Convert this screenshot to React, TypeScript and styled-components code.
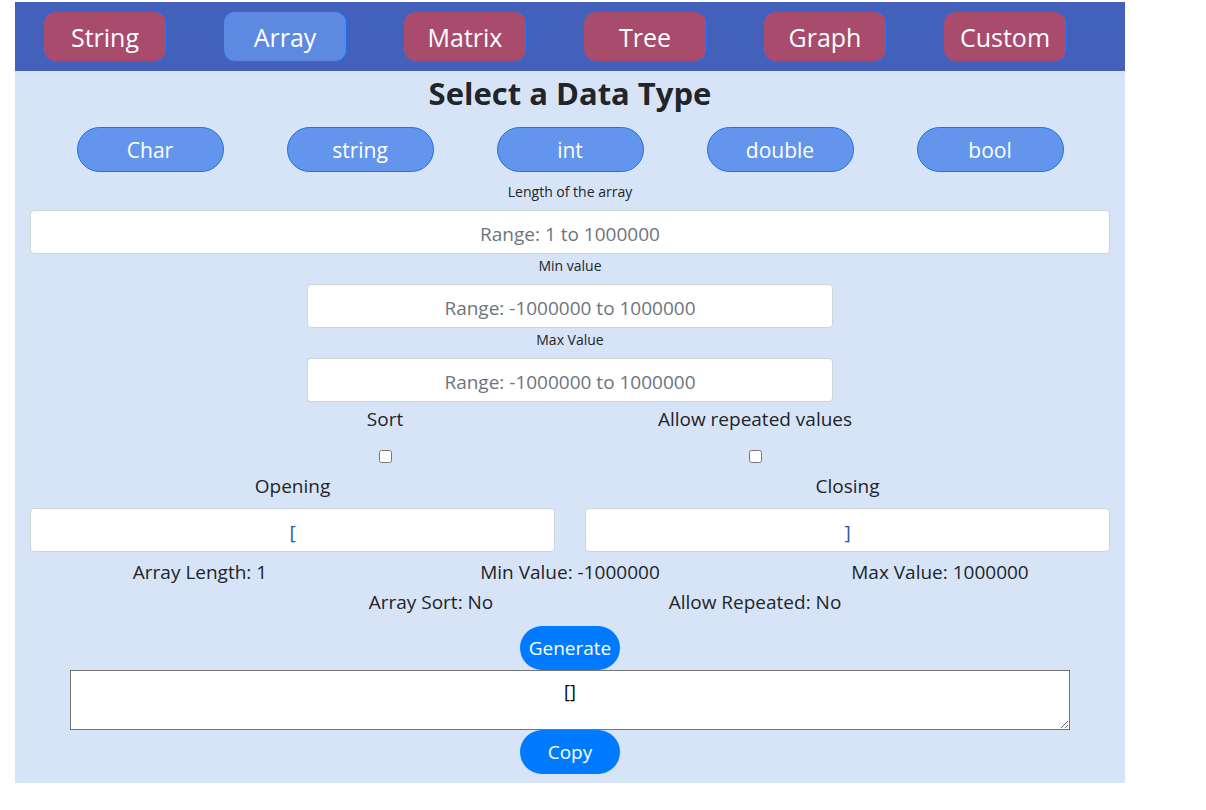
import styled, { createGlobalStyle } from 'styled-components';

const GlobalStyle = createGlobalStyle`
  body {
    margin: 0;
    background: #ffffff;
    font-family: 'Segoe UI', 'Open Sans', 'Noto Sans', sans-serif;
    color: #212529;
  }
`;

const structures = ['String', 'Array', 'Matrix', 'Tree', 'Graph', 'Custom'];
const dataTypes = ['Char', 'string', 'int', 'double', 'bool'];

export default function App() {
  return (
    <>
      <GlobalStyle />
      <Page>
        <NavBar>
          {structures.map((s) => (
            <NavCell key={s}>
              <NavButton $active={s === 'Array'}>{s}</NavButton>
            </NavCell>
          ))}
        </NavBar>
        <Main>
          <Title>Select a Data Type</Title>
          <TypeRow>
            {dataTypes.map((t) => (
              <TypeCell key={t}>
                <TypeButton>{t}</TypeButton>
              </TypeCell>
            ))}
          </TypeRow>

          <SmallLabel>Length of the array</SmallLabel>
          <FieldWrap $width={1080}>
            <TextInput placeholder="Range: 1 to 1000000" />
          </FieldWrap>
          <SmallLabel>Min value</SmallLabel>
          <FieldWrap $width={526}>
            <TextInput placeholder="Range: -1000000 to 1000000" />
          </FieldWrap>
          <SmallLabel>Max Value</SmallLabel>
          <FieldWrap $width={526}>
            <TextInput placeholder="Range: -1000000 to 1000000" />
          </FieldWrap>

          <OptionRow>
            <OptionCell>
              <OptionLabel>Sort</OptionLabel>
              <Check type="checkbox" />
            </OptionCell>
            <OptionCell>
              <OptionLabel>Allow repeated values</OptionLabel>
              <Check type="checkbox" />
            </OptionCell>
          </OptionRow>

          <BracketRow>
            <BracketCell>
              <OptionLabel>Opening</OptionLabel>
              <TextInput defaultValue="[" />
            </BracketCell>
            <BracketCell>
              <OptionLabel>Closing</OptionLabel>
              <TextInput defaultValue="]" />
            </BracketCell>
          </BracketRow>

          <StatsRow>
            <Stat>Array Length: 1</Stat>
            <Stat>Min Value: -1000000</Stat>
            <Stat>Max Value: 1000000</Stat>
          </StatsRow>
          <StatsRowTwo>
            <Stat $shift={92}>Array Sort: No</Stat>
            <Stat>Allow Repeated: No</Stat>
          </StatsRowTwo>

          <ActionButton>Generate</ActionButton>
          <Output readOnly value="[]" />
          <ActionButton>Copy</ActionButton>
        </Main>
      </Page>
    </>
  );
}

const Page = styled.div`
  width: 1110px;
  margin-left: 15px;
  padding-top: 2px;
`;

const NavBar = styled.nav`
  display: grid;
  grid-template-columns: repeat(6, 180px);
  padding: 9px 0;
  background: #4360ba;
`;

const NavCell = styled.div`
  display: flex;
  justify-content: center;
`;

const NavButton = styled.button<{ $active?: boolean }>`
  width: 124px;
  height: 51px;
  border: 1px solid #1a6ff0;
  border-radius: 12px;
  background: ${(p) => (p.$active ? '#5e89e1' : '#a84b6d')};
  color: #ffffff;
  font-family: inherit;
  font-size: 25px;
  padding: 0;
  cursor: pointer;
`;

const Main = styled.main`
  background: #d7e4f8;
  display: flex;
  flex-direction: column;
  align-items: center;
  padding-bottom: 9px;
`;

const Title = styled.h2`
  margin: 3px 0 0;
  font-size: 31px;
  font-weight: 700;
  line-height: 38px;
  color: #212529;
`;

const TypeRow = styled.div`
  display: grid;
  grid-template-columns: repeat(5, 210px);
  margin: 15px 0 8px;
`;

const TypeCell = styled.div`
  display: flex;
  justify-content: center;
`;

const TypeButton = styled.button`
  width: 147px;
  height: 45px;
  border: 1px solid #1a73e8;
  border-radius: 23px;
  background: #6495ed;
  color: #ffffff;
  font-family: inherit;
  font-size: 21px;
  padding: 0;
`;

const SmallLabel = styled.div`
  font-size: 14px;
  line-height: 21px;
  margin: 1px 0 8px;
  color: #212529;
`;

const FieldWrap = styled.div<{ $width: number }>`
  width: ${(p) => p.$width}px;
`;

const TextInput = styled.input`
  box-sizing: border-box;
  width: 100%;
  height: 44px;
  border: 1px solid #ced4da;
  border-radius: 4px;
  background: #ffffff;
  text-align: center;
  font-family: inherit;
  font-size: 19px;
  color: #1f5aa6;
  padding-top: 4px;
  outline: none;

  &::placeholder {
    color: #6c757d;
  }
`;

const OptionRow = styled.div`
  display: grid;
  grid-template-columns: 370px 370px;
  margin-top: 2px;
`;

const OptionCell = styled.div`
  display: flex;
  flex-direction: column;
  align-items: center;
`;

const OptionLabel = styled.div`
  font-size: 19px;
  line-height: 30px;
  color: #212529;
  margin-bottom: 7px;
`;

const Check = styled.input`
  width: 13px;
  height: 13px;
  margin: 9px 0 8px;
`;

const BracketRow = styled.div`
  display: grid;
  grid-template-columns: 525px 525px;
  column-gap: 30px;
`;

const BracketCell = styled.div`
  display: flex;
  flex-direction: column;
  align-items: center;
`;

const StatsRow = styled.div`
  display: grid;
  grid-template-columns: repeat(3, 370px);
  margin-top: 5px;
`;

const StatsRowTwo = styled.div`
  display: grid;
  grid-template-columns: 370px 370px;
`;

const Stat = styled.div<{ $shift?: number }>`
  text-align: center;
  font-size: 19px;
  line-height: 30px;
  color: #212529;
  padding-left: ${(p) => p.$shift ?? 0}px;
`;

const ActionButton = styled.button`
  width: 100px;
  height: 44px;
  border: none;
  border-radius: 22px;
  background: #007bff;
  color: #ffffff;
  font-family: inherit;
  font-size: 19px;
  padding: 0;
  &:first-of-type {
    margin-top: 9px;
  }
`;

const Output = styled.textarea`
  box-sizing: border-box;
  width: 1000px;
  height: 60px;
  border: 1px solid #767676;
  background: #ffffff;
  text-align: center;
  font-family: inherit;
  font-size: 18px;
  color: #000000;
  padding: 8px 4px 4px;
  resize: both;
`;
